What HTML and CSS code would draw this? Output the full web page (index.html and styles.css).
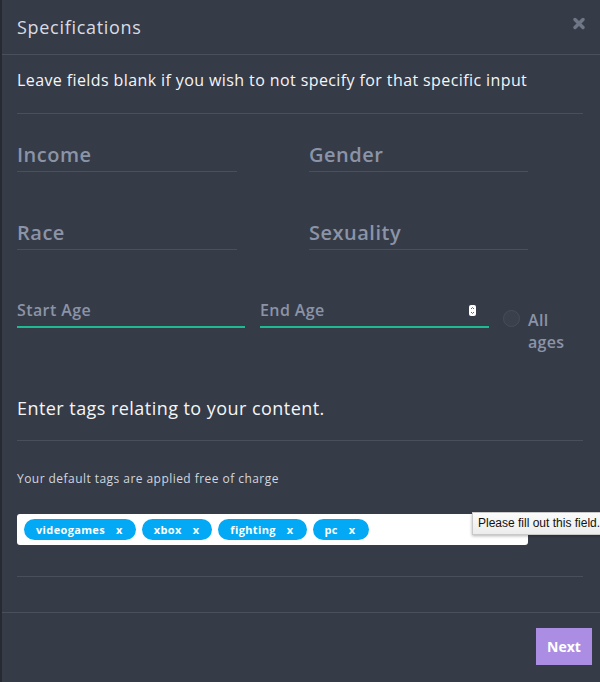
FILE: index.html
```html
<!DOCTYPE html>
<html>
<head>
<meta charset="utf-8">
<link rel="stylesheet" href="styles.css">
</head>
<body>
<div class="modal">
  <header class="modal-header">
    <h1 class="modal-title">Specifications</h1>
    <svg class="close" width="12" height="13" viewBox="0 0 12 13"><path d="M2 2.5 L10 10.5 M10 2.5 L2 10.5" stroke="#6f7686" stroke-width="3.4" stroke-linecap="round"/></svg>
  </header>
  <div class="modal-body">
    <p class="intro">Leave fields blank if you wish to not specify for that specific input</p>
    <div class="grid">
      <input class="field big" placeholder="Income">
      <input class="field big" placeholder="Gender">
      <input class="field big" placeholder="Race">
      <input class="field big" placeholder="Sexuality">
    </div>
    <div class="age-row">
      <input class="field age" placeholder="Start Age">
      <div class="end-wrap">
        <input class="field age end" placeholder="End Age">
        <svg class="spinner" width="7" height="11" viewBox="0 0 7 11"><rect x="0" y="0" width="7" height="11" rx="2" fill="#fff"/><path d="M2 4 L3.5 2.5 L5 4 M2 7 L3.5 8.5 L5 7" stroke="#555" stroke-width="0.9" fill="none"/></svg>
      </div>
      <label class="all-ages"><span class="radio"></span><span class="all-text">All<br>ages</span></label>
    </div>
    <h2 class="tags-title">Enter tags relating to your content.</h2>
    <p class="tags-note">Your default tags are applied free of charge</p>
    <div class="tag-box">
      <span class="tag">videogames<span class="x">x</span></span>
      <span class="tag">xbox<span class="x">x</span></span>
      <span class="tag">fighting<span class="x">x</span></span>
      <span class="tag">pc<span class="x">x</span></span>
      <div class="tooltip">Please fill out this field.</div>
    </div>
    <div class="end-line"></div>
  </div>
  <footer class="modal-footer">
    <button class="next">Next</button>
  </footer>
</div>
</body>
</html>
```
FILE: styles.css
```css
* { box-sizing: border-box; }
html, body { margin: 0; padding: 0; }
body {
  background: #363b48;
  font-family: "Open Sans", "Noto Sans", sans-serif;
  width: 600px;
  height: 682px;
  overflow: hidden;
}
.modal {
  height: 682px;
  border-left: 2px solid #262a33;
  display: flex;
  flex-direction: column;
}
.modal-header {
  height: 55px;
  border-bottom: 1px solid #4a4f5c;
  display: flex;
  align-items: center;
  justify-content: space-between;
  padding: 0 15px 0 15px;
}
.modal-title {
  margin: 0;
  font-size: 18px;
  font-weight: 400;
  letter-spacing: 0.7px;
  color: #d9dce3;
}
.close { margin-top: -8px; }
.modal-body {
  padding: 0 17px 0 15px;
}
.intro {
  margin: 0;
  padding: 13px 0 21px;
  line-height: 24px;
  font-size: 16px;
  letter-spacing: 0.4px;
  color: #f4f5f7;
  border-bottom: 1px solid #4a4f5c;
}
.grid {
  display: grid;
  grid-template-columns: 220px 219px;
  column-gap: 72px;
  row-gap: 44px;
  padding-top: 24px;
}
.field {
  display: block;
  width: 100%;
  height: 34px;
  background: transparent;
  border: 0;
  border-bottom: 1px solid #4a4f5c;
  padding: 0;
  outline: none;
  font-family: inherit;
  color: #fff;
}
.field::placeholder { color: #8b94a7; opacity: 1; }
.big { font-size: 20px; font-weight: 600; letter-spacing: 0.5px; }
.age-row {
  display: flex;
  align-items: flex-start;
  margin-top: 44px;
  height: 101px;
}
.age {
  font-size: 16px;
  font-weight: 600;
  letter-spacing: 0.4px;
  border-bottom: 2px solid #1fb992;
}
.age-row > .age { width: 228px; }
.end-wrap { position: relative; width: 229px; margin-left: 15px; }
.spinner { position: absolute; right: 13px; top: 11px; }
.all-ages {
  display: flex;
  align-items: flex-start;
  margin-left: 14px;
  padding-top: 16px;
}
.radio {
  width: 17px;
  height: 17px;
  border-radius: 50%;
  border: 1px solid #474d5b;
  background: #3b404d;
}
.all-text {
  margin-left: 8px;
  margin-top: -1px;
  font-size: 16px;
  font-weight: 600;
  letter-spacing: 0.3px;
  line-height: 22px;
  color: #8b94a7;
}
.tags-title {
  margin: 0;
  font-size: 18px;
  font-weight: 400;
  letter-spacing: 0.45px;
  color: #f4f5f7;
  line-height: 24px;
  padding: 1px 0 20px;
  border-bottom: 1px solid #4a4f5c;
}
.tags-note {
  margin: 0;
  padding: 29px 0 0;
  font-size: 12px;
  letter-spacing: 0.45px;
  line-height: 18px;
  color: #d3d6dd;
}
.tag-box {
  position: relative;
  margin-top: 26px;
  width: 511px;
  height: 31px;
  background: #fff;
  border-radius: 3px;
  display: flex;
  align-items: center;
  gap: 6px;
  padding: 0 7px;
}
.tag {
  display: inline-flex;
  align-items: center;
  height: 21px;
  padding: 0 13px 0 12px;
  border-radius: 11px;
  background: #03a9f4;
  color: #fff;
  font-size: 11px;
  letter-spacing: 0.35px;
  font-weight: 700;
}
.tag .x { margin-left: 11px; }
.tooltip {
  position: absolute;
  left: 455px;
  top: -2px;
  white-space: nowrap;
  background: linear-gradient(#fbfbfb, #ececec);
  border: 1px solid #c9c9c9;
  box-shadow: 0 1px 3px rgba(0,0,0,0.3);
  font-family: "Liberation Sans", Arial, sans-serif;
  font-size: 12px;
  color: #111;
  padding: 3px 5px 4px;
}
.end-line {
  margin-top: 31px;
  border-bottom: 1px solid #4a4f5c;
}
.modal-footer {
  margin-top: 35px;
  border-top: 1px solid #4a4f5c;
  display: flex;
  justify-content: flex-end;
  padding: 15px 8px 0 0;
}
.next {
  width: 56px;
  height: 37px;
  border: 0;
  border-radius: 0;
  background: #ab8ee3;
  color: #fff;
  font-family: "Open Sans", sans-serif;
  font-weight: 700;
  font-size: 14px;
  padding: 0;
}
```
